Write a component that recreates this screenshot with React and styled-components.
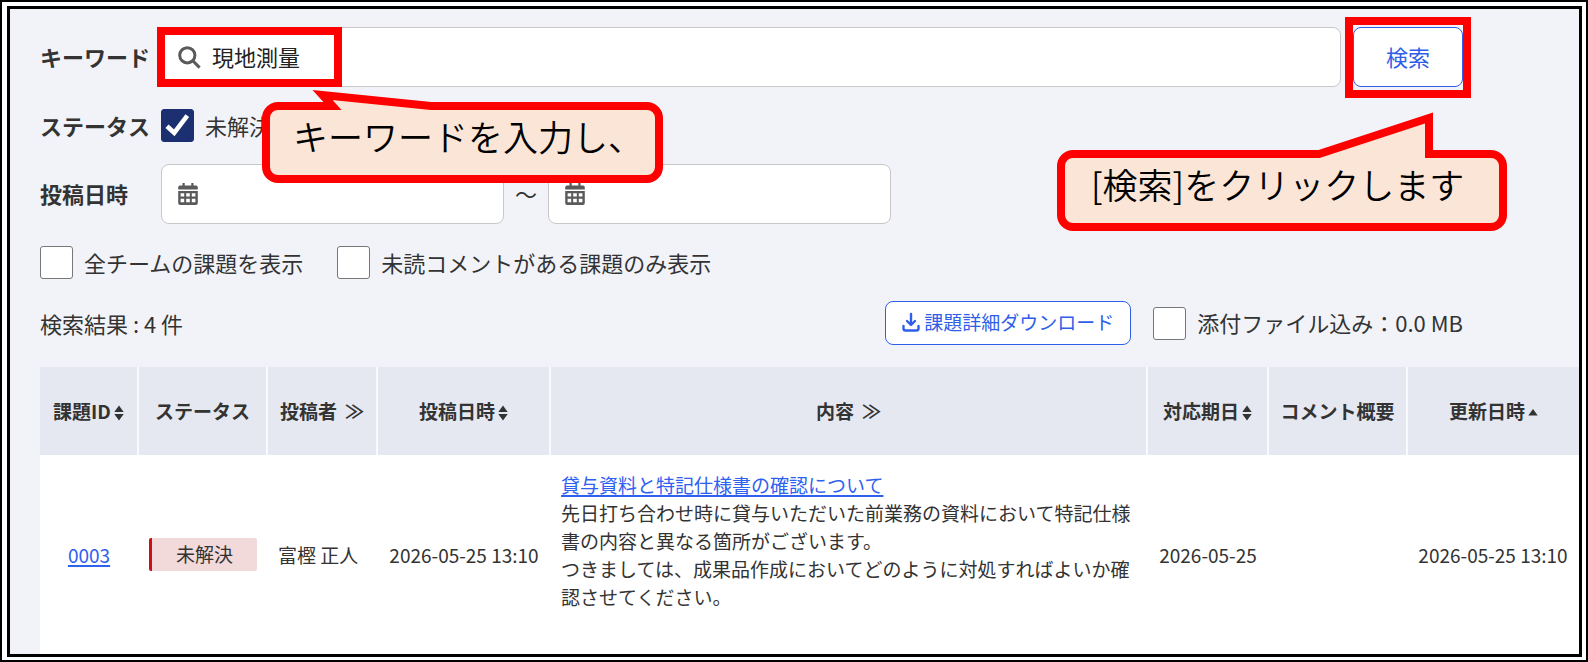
import React from "react";
import styled, { createGlobalStyle, css } from "styled-components";

const GlobalStyle = createGlobalStyle`
  *, *::before, *::after { box-sizing: border-box; }
  body {
    margin: 0;
    background: #fff;
    color: #333;
    font-family: "Noto Sans CJK JP", "Noto Sans", sans-serif;
    font-size: 22px;
    line-height: 32px;
  }
  button, input { font: inherit; }
`;

const OuterFrame = styled.div`
  display: flex;
  min-height: 100vh;
  border: 2px solid #000;
  padding: 4px 4px 3px 5px;
  background: #fff;
`;

const Page = styled.main`
  flex: 1;
  min-width: 0;
  border: 3px solid #000;
  background: #f2f3f8;
  padding: 18px 0 0 30px;
  display: flex;
  flex-direction: column;
`;

const Filters = styled.form`
  display: flex;
  flex-direction: column;
  padding-right: 116px;
`;

const FilterRow = styled.div`
  display: flex;
  align-items: center;
  height: ${(p) => (p.$tall ? "60px" : "33px")};
  margin-bottom: 22px;
`;

const RowLabel = styled.label`
  flex: 0 0 121px;
  padding-bottom: 2px;
  font-weight: 700;
  white-space: nowrap;
`;

const Field = styled.div`
  position: relative;
  flex: ${(p) => (p.$grow ? "1" : "0 0 343px")};
  height: 60px;
  svg.glyph {
    position: absolute;
    left: 17px;
    top: 19px;
    color: #5a5a5a;
  }
`;

const TextBox = styled.input`
  width: 100%;
  height: 60px;
  border: 1px solid #c8c8c8;
  border-radius: 8px;
  background: #fff;
  color: #222;
  padding: 0 16px 2px 50px;
`;

const ButtonSlot = styled.div`
  position: relative;
  margin-left: 12px;
`;

const Button = styled.button`
  display: flex;
  align-items: center;
  justify-content: center;
  gap: 4px;
  border: 1px solid #2f5fea;
  border-radius: 8px;
  background: #fff;
  color: #2f5fe8;
  padding: 0 0 2px;
  ${(p) =>
    p.$small
      ? css`
          width: 246px;
          height: 44px;
          font-size: 19px;
        `
      : css`
          width: 110px;
          height: 60px;
        `}
`;

const CheckLabel = styled.label`
  display: flex;
  align-items: center;
  gap: 11px;
  white-space: nowrap;
`;

const CheckText = styled.span`
  padding-bottom: 2px;
`;

const CheckBoxWrap = styled.span`
  position: relative;
  display: flex;
  svg {
    position: absolute;
    left: 0;
    top: 0;
    pointer-events: none;
  }
`;

const CheckInput = styled.input`
  appearance: none;
  width: 33px;
  height: 33px;
  margin: 0;
  border: 1px solid #777;
  border-radius: 3px;
  background: #fff;
  &:checked {
    background: #1c2f70;
    border-color: #1c2f70;
  }
`;

const Tilde = styled.span`
  width: 44px;
  padding-bottom: 2px;
  text-align: center;
`;

const Options = styled.div`
  display: flex;
  align-items: center;
  gap: 34px;
  height: 33px;
  margin-bottom: 22px;
`;

const Toolbar = styled.div`
  display: flex;
  align-items: center;
  gap: 22px;
  height: 44px;
  margin-bottom: 22px;
  padding-right: 116px;
`;

const Count = styled.p`
  flex: 1;
  margin: 0;
`;

const Table = styled.table`
  flex: 1;
  width: 100%;
  table-layout: fixed;
  border-collapse: separate;
  border-spacing: 0;
  font-size: 19px;
  line-height: 28px;
  background: #fff;
`;

const Col = styled.col`
  width: ${(p) => p.$width || "auto"};
`;

const HeadCell = styled.th`
  height: 88px;
  padding: 0;
  background: #e5e8f1;
  font-weight: 700;
  white-space: nowrap;
  &:not(:last-child) {
    border-right: 2px solid #f9fafc;
  }
`;

const HeadContent = styled.span`
  display: inline-flex;
  align-items: center;
  gap: ${(p) => (p.$wide ? "8px" : "3px")};
  svg {
    margin-top: 4px;
  }
`;

const Cell = styled.td`
  height: 198px;
  padding: 0 11px 0 10px;
  text-align: ${(p) => p.$align || "center"};
  vertical-align: middle;
  white-space: ${(p) => (p.$wrap ? "normal" : "nowrap")};
`;

const Link = styled.a`
  color: #2f61f0;
  text-decoration: underline;
  text-decoration-thickness: 2px;
  text-underline-offset: 2px;
`;

const Status = styled.span`
  display: block;
  height: 33px;
  line-height: 32px;
  border-left: 3px solid #cc1015;
  border-radius: 2px;
  background: #f2dada;
`;

const Message = styled.p`
  margin: 0;
  padding-bottom: 28px;
`;

const Highlight = styled.span`
  position: absolute;
  border: 8px solid #f00;
  pointer-events: none;
  ${(p) =>
    p.$around
      ? css`
          inset: -10px -8px -11px -8px;
        `
      : css`
          left: -4px;
          top: 0;
          width: 185px;
          height: 60px;
        `}
`;

const Callout = styled.div`
  position: absolute;
  z-index: 2;
  height: 81px;
  color: #000;
  font-size: 35px;
  font-weight: 350;
  line-height: 52px;
  white-space: nowrap;
  pointer-events: none;
  ${(p) =>
    p.$side === "left"
      ? css`
          left: 101px;
          top: 75px;
          width: 401px;
          padding: 8px 0 0 31px;
        `
      : css`
          right: -44px;
          top: 123px;
          width: 450px;
          padding: 8px 0 0 34px;
        `}
  svg {
    position: absolute;
    left: 0;
    top: 0;
    overflow: visible;
  }
  span {
    position: relative;
  }
`;

function Bubble({ width, d }) {
  return (
    <svg width={width} height="81" aria-hidden="true">
      <path d={d} fill="#fbe5d6" stroke="#f00" strokeWidth="8" strokeMiterlimit="10" />
    </svg>
  );
}

function SearchIcon() {
  return (
    <svg className="glyph" width="23" height="23" viewBox="0 0 23 23" fill="none" stroke="currentColor" strokeWidth="3" aria-hidden="true">
      <circle cx="9.3" cy="9.3" r="7.6" />
      <path d="M14.8 14.8L21.6 21.6" />
    </svg>
  );
}

function CalendarIcon() {
  return (
    <svg className="glyph" width="20" height="22" viewBox="0 0 20 22" fill="currentColor" aria-hidden="true">
      <path d="M4.5 0h2.2v2.6h6.6V0h2.2v2.6H18A1.8 1.8 0 0 1 19.8 4.4V6.6H.2V4.4A1.8 1.8 0 0 1 2 2.6h2.5z" />
      <path
        fillRule="evenodd"
        d="M.2 8h19.6v12a1.9 1.9 0 0 1-1.9 1.9H2.1A1.9 1.9 0 0 1 .2 20zM2.6 10.2v3.4h3.6v-3.4zM8.2 10.2v3.4h3.6v-3.4zM13.8 10.2v3.4h3.6v-3.4zM2.6 15.8v3.4h3.6v-3.4zM8.2 15.8v3.4h3.6v-3.4zM13.8 15.8v3.4h3.6v-3.4z"
      />
    </svg>
  );
}

function CheckMark() {
  return (
    <svg width="33" height="33" viewBox="0 0 33 33" fill="none" stroke="#fff" strokeWidth="4.6" aria-hidden="true">
      <path d="M6 17.3L13.2 23.8L26.3 6.6" />
    </svg>
  );
}

function SortIcon({ up }) {
  return (
    <svg width="10" height="16" viewBox="0 0 10 16" fill="#333" aria-hidden="true">
      {up ? (
        <path d="M5 4L9.7 10.5H.3z" />
      ) : (
        <>
          <path d="M5 .5L9.7 7H.3z" />
          <path d="M5 15.5L9.7 9H.3z" />
        </>
      )}
    </svg>
  );
}

function DownloadIcon() {
  return (
    <svg width="18" height="20" viewBox="0 0 18 20" fill="none" stroke="currentColor" strokeWidth="2.4" strokeLinecap="round" strokeLinejoin="round" aria-hidden="true">
      <path d="M9 2v10.5M5 9l4 4 4-4M1.5 14v2.5a2 2 0 0 0 2 2h11a2 2 0 0 0 2-2V14" />
    </svg>
  );
}

function Check({ label, checked }) {
  return (
    <CheckLabel>
      <CheckBoxWrap>
        <CheckInput type="checkbox" defaultChecked={checked} />
        {checked && <CheckMark />}
      </CheckBoxWrap>
      <CheckText>{label}</CheckText>
    </CheckLabel>
  );
}

const columns = [
  { name: "課題ID", width: "99px", sort: "both" },
  { name: "ステータス", width: "129px" },
  { name: "投稿者", width: "110px", expand: true },
  { name: "投稿日時", width: "173px", sort: "both" },
  { name: "内容", expand: true },
  { name: "対応期日", width: "121px", sort: "both" },
  { name: "コメント概要", width: "139px" },
  { name: "更新日時", width: "171px", sort: "up" },
];

export default function App() {
  return (
    <OuterFrame>
      <GlobalStyle />
      <Page>
        <Filters onSubmit={(e) => e.preventDefault()}>
          <FilterRow $tall>
            <RowLabel htmlFor="keyword">キーワード</RowLabel>
            <Field $grow>
              <TextBox id="keyword" type="text" defaultValue="現地測量" />
              <SearchIcon />
              <Highlight />
              <Callout $side="left">
                <Bubble
                  width={401}
                  d="M16 4H70.5L60.5 -7L169 4H385A12 12 0 0 1 397 16V65A12 12 0 0 1 385 77H16A12 12 0 0 1 4 65V16A12 12 0 0 1 16 4Z"
                />
                <span>キーワードを入力し、</span>
              </Callout>
            </Field>
            <ButtonSlot>
              <Button type="submit">検索</Button>
              <Highlight $around />
              <Callout $side="right">
                <Bubble
                  width={450}
                  d="M16 4H262L372 -32V4H434A12 12 0 0 1 446 16V65A12 12 0 0 1 434 77H16A12 12 0 0 1 4 65V16A12 12 0 0 1 16 4Z"
                />
                <span>[検索]をクリックします</span>
              </Callout>
            </ButtonSlot>
          </FilterRow>
          <FilterRow>
            <RowLabel as="span">ステータス</RowLabel>
            <Check label="未解決" checked />
          </FilterRow>
          <FilterRow $tall>
            <RowLabel htmlFor="from">投稿日時</RowLabel>
            <Field>
              <TextBox id="from" type="text" />
              <CalendarIcon />
            </Field>
            <Tilde>～</Tilde>
            <Field>
              <TextBox type="text" aria-label="投稿日時の終了" />
              <CalendarIcon />
            </Field>
          </FilterRow>
          <Options>
            <Check label="全チームの課題を表示" />
            <Check label="未読コメントがある課題のみ表示" />
          </Options>
        </Filters>
        <Toolbar>
          <Count>検索結果 : 4 件</Count>
          <Button type="button" $small>
            <DownloadIcon />
            課題詳細ダウンロード
          </Button>
          <Check label="添付ファイル込み：0.0 MB" />
        </Toolbar>
        <Table>
          <colgroup>
            {columns.map((c) => (
              <Col key={c.name} $width={c.width} />
            ))}
          </colgroup>
          <thead>
            <tr>
              {columns.map((c) => (
                <HeadCell key={c.name} scope="col">
                  <HeadContent $wide={c.expand}>
                    {c.name}
                    {c.expand && <span>≫</span>}
                    {c.sort && <SortIcon up={c.sort === "up"} />}
                  </HeadContent>
                </HeadCell>
              ))}
            </tr>
          </thead>
          <tbody>
            <tr>
              <Cell><Link href="#0003">0003</Link></Cell>
              <Cell><Status>未解決</Status></Cell>
              <Cell $align="left">富樫 正人</Cell>
              <Cell>2026-05-25 13:10</Cell>
              <Cell $align="left" $wrap>
                <Message>
                  <Link href="#detail">貸与資料と特記仕様書の確認について</Link>
                  <br />
                  先日打ち合わせ時に貸与いただいた前業務の資料において特記仕様書の内容と異なる箇所がございます。
                  <br />
                  つきましては、成果品作成においてどのように対処すればよいか確認させてください。
                </Message>
              </Cell>
              <Cell>2026-05-25</Cell>
              <Cell />
              <Cell>2026-05-25 13:10</Cell>
            </tr>
          </tbody>
        </Table>
      </Page>
    </OuterFrame>
  );
}
